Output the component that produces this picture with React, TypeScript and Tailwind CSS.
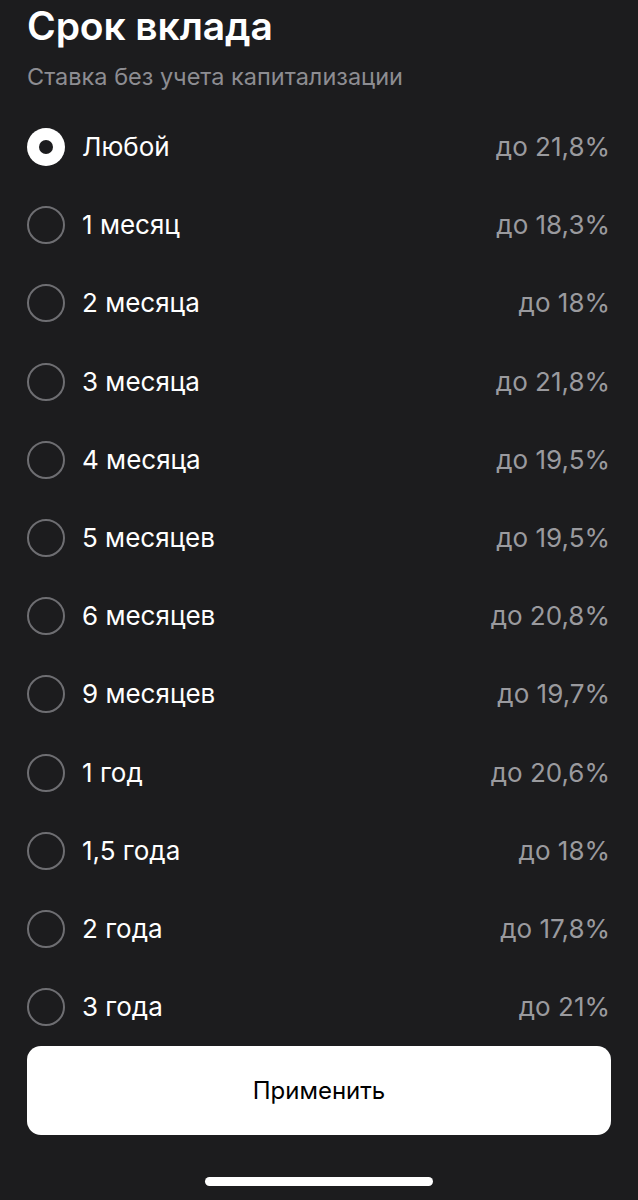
const options = [
  { label: "Любой", rate: "до 21,8%" },
  { label: "1 месяц", rate: "до 18,3%" },
  { label: "2 месяца", rate: "до 18%" },
  { label: "3 месяца", rate: "до 21,8%" },
  { label: "4 месяца", rate: "до 19,5%" },
  { label: "5 месяцев", rate: "до 19,5%" },
  { label: "6 месяцев", rate: "до 20,8%" },
  { label: "9 месяцев", rate: "до 19,7%" },
  { label: "1 год", rate: "до 20,6%" },
  { label: "1,5 года", rate: "до 18%" },
  { label: "2 года", rate: "до 17,8%" },
  { label: "3 года", rate: "до 21%" },
];

function Radio({ checked }: { checked: boolean }) {
  if (checked) {
    return (
      <span className="flex h-[38px] w-[38px] shrink-0 items-center justify-center rounded-full bg-white">
        <span className="h-[14px] w-[14px] rounded-full bg-[#1c1c1e]" />
      </span>
    );
  }
  return <span className="h-[38px] w-[38px] shrink-0 rounded-full border-2 border-[#6e6e72]" />;
}

export default function App() {
  const selected = 0;
  return (
    <div
      className="h-[1200px] w-[638px] overflow-hidden bg-[#1c1c1e] text-white"
      style={{ fontFamily: "Inter, 'Noto Sans', sans-serif" }}
    >
      <div className="px-[27px] pt-[4px]">
        <h1 className="text-[39px] font-semibold leading-[44px] tracking-[-0.1px]">Срок вклада</h1>
        <p className="mt-[15px] text-[23.5px] leading-[28px] text-[#8d8d92]">Ставка без учета капитализации</p>
      </div>

      <ul className="mt-[17px] px-[27px]">
        {options.map((o, i) => (
          <li key={o.label} className="flex h-[78.2px] items-center">
            <Radio checked={i === selected} />
            <span className="ml-[17px] flex-1 text-[26px] leading-none">{o.label}</span>
            <span className="mr-[1px] text-[26px] leading-none text-[#9a9a9e]">{o.rate}</span>
          </li>
        ))}
      </ul>

      <div className="px-[27px]">
        <button className="flex h-[89px] w-full items-center justify-center rounded-[14px] bg-white text-[24px] font-normal text-black">
          Применить
        </button>
      </div>

      <div className="mt-[42px] flex justify-center">
        <div className="h-[9px] w-[228px] rounded-full bg-white" />
      </div>
    </div>
  );
}
